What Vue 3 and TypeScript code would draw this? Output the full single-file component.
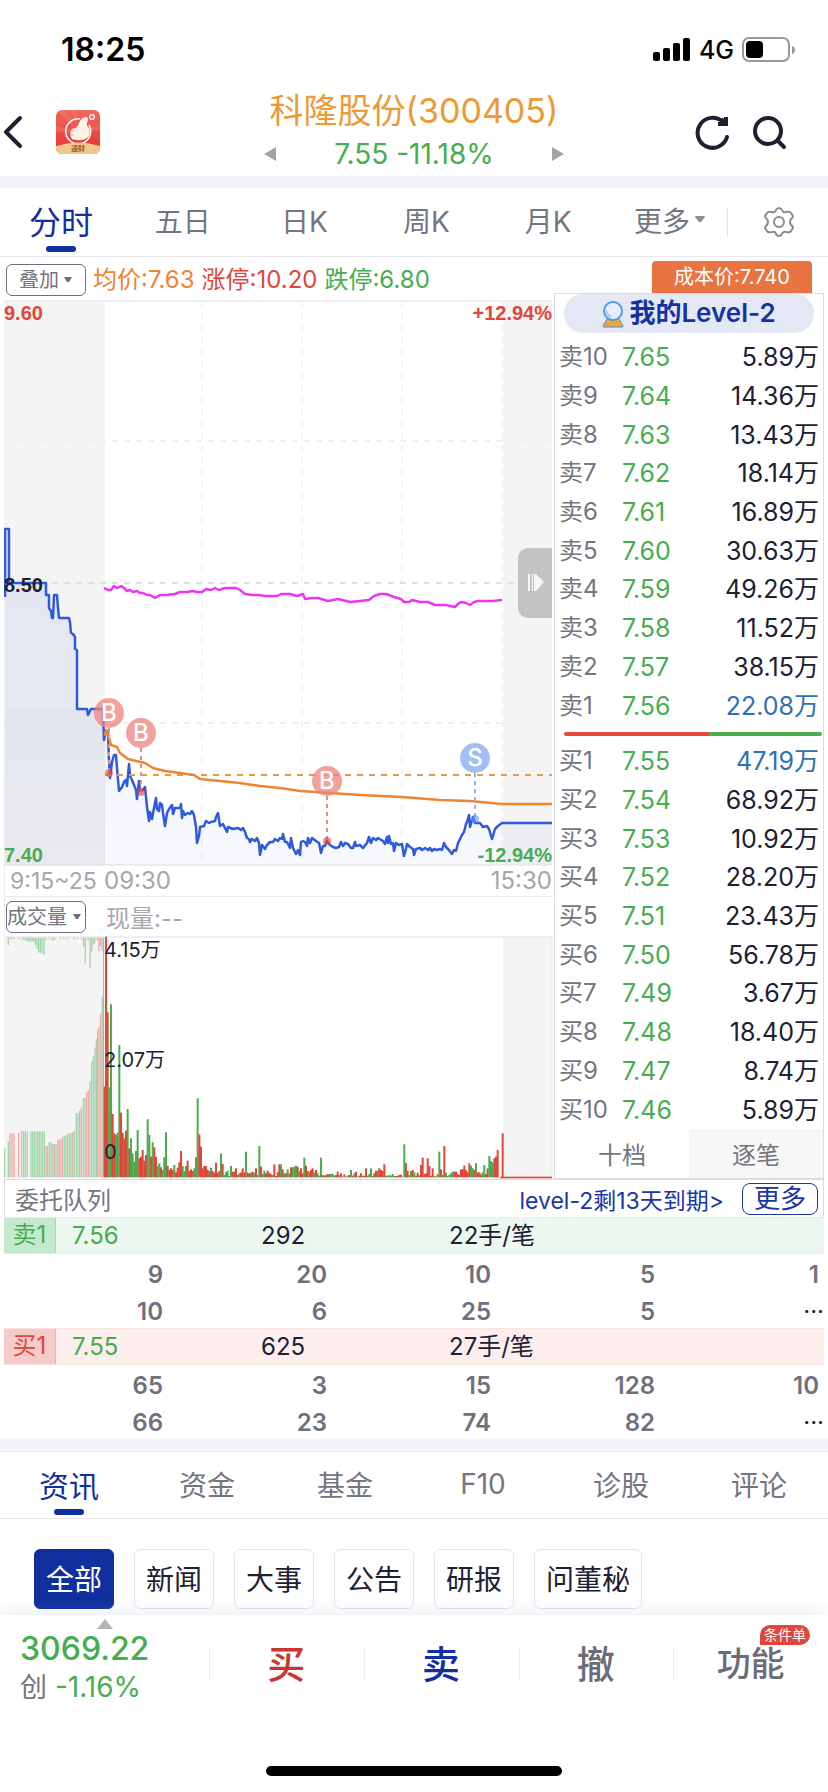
<script setup lang="ts">
import { ref } from 'vue'

interface Level { label: string; price: string; volume: string; mine?: boolean }
interface Bar { x: number; y: number; h: number; up: boolean }

const periods = ['分时', '五日', '日K', '周K', '月K']
const activePeriod = ref('分时')
const overlay = ref('叠加')
const indicator = ref('成交量')
const depthMode = ref('十档')

function levels(side: string, rows: [number, string, string][]): Level[] {
  return rows.map(([n, price, vol]) => ({
    label: side + n, price, volume: vol + '万', mine: n === 1,
  }))
}
const asks = levels('卖', [
  [10, '7.65', '5.89'], [9, '7.64', '14.36'], [8, '7.63', '13.43'], [7, '7.62', '18.14'],
  [6, '7.61', '16.89'], [5, '7.60', '30.63'], [4, '7.59', '49.26'], [3, '7.58', '11.52'],
  [2, '7.57', '38.15'], [1, '7.56', '22.08'],
])
const bids = levels('买', [
  [1, '7.55', '47.19'], [2, '7.54', '68.92'], [3, '7.53', '10.92'], [4, '7.52', '28.20'],
  [5, '7.51', '23.43'], [6, '7.50', '56.78'], [7, '7.49', '3.67'], [8, '7.48', '18.40'],
  [9, '7.47', '8.74'], [10, '7.46', '5.89'],
])

const queues = [
  { side: 'sell', label: '卖1', price: '7.56', count: '292', avg: '22手/笔',
    rows: [['9', '20', '10', '5', '1'], ['10', '6', '25', '5', '···']] },
  { side: 'buy', label: '买1', price: '7.55', count: '625', avg: '27手/笔',
    rows: [['65', '3', '15', '128', '10'], ['66', '23', '74', '82', '···']] },
]

const sections = ['资讯', '资金', '基金', 'F10', '诊股', '评论']
const activeSection = ref('资讯')
const filters = ['全部', '新闻', '大事', '公告', '研报', '问董秘']
const activeFilter = ref('全部')

const pricePoints =
  '5,597 5,529 9,529 9,583 46,583 46,595 49,595 49,608 51,611 52,618 53,618 54,595 57,595 58,608 59,618 69,618 70,622 71,633 73,634 75,637 75,649 77,650 77,709 87,709 88,715 90,711 91,709 103,709 104,740 106,730 108,733 109,760 110,778 112,762 114,755 116,755 117,768 119,791 122,787 124,782 126,780 127,786 129,764 130,776 132,780 134,785 136,790 137,799 139,781 140,791 143,790 145,787 147,807 149,821 150,812 152,819 154,808 156,798 157,809 159,811 160,803 162,805 163,813 165,826 167,813 169,809 172,805 173,814 175,808 180,808 181,804 182,818 183,811 185,815 188,813 190,814 192,811 194,815 196,827 197,843 199,836 200,827 204,826 206,821 209,823 211,822 215,821 216,817 218,813 220,826 223,824 225,828 227,832 228,827 233,829 238,828 241,830 243,828 245,832 247,838 249,839 250,842 252,839 255,841 257,838 259,843 260,855 262,845 265,849 267,845 270,842 273,842 275,839 278,841 280,838 282,839 283,834 285,842 287,842 290,848 291,838 293,848 296,854 298,850 300,855 301,842 303,841 305,842 307,846 308,838 310,843 312,838 316,841 319,843 321,853 323,846 325,846 327,841 330,845 333,847 336,848 339,847 341,842 343,846 345,843 348,844 351,848 353,848 355,842 356,846 360,845 363,848 367,843 369,837 371,843 373,838 376,840 378,838 383,841 385,844 387,837 388,843 389,836 391,844 393,843 394,851 396,843 399,845 402,844 404,856 406,849 407,844 410,847 413,849 414,855 416,849 420,848 422,850 425,848 428,850 430,848 432,851 434,849 437,850 440,849 442,850 444,843 446,847 449,850 452,854 454,850 456,851 458,843 460,839 462,835 464,832 466,824 467,822 469,815 470,827 473,817 475,823 480,823 483,827 487,826 489,829 492,839 495,829 498,826 502,823 552,823'
const areaPoints = `4,865 ${pricePoints} 552,865`
const avgPoints =
  '105,736 106,730 109,738 111,745 117,747 120,753 124,756 128,759 136,761 145,763 153,768 165,771 180,773 194,775 200,779 220,781 240,783 260,786 280,788 300,791 330,793 360,795 402,797 440,800 470,801 502,804 552,804'
const indexPoints =
  '104,588 108,590 111,590 114,586 117,588 121,586 124,588 127,591 130,590 133,592 137,591 140,593 143,593 147,595 150,595 155,598 160,595 166,595 175,594 180,592 187,592 193,591 197,592 202,592 206,589 211,590 215,588 219,590 225,588 232,588 236,588 240,590 245,594 252,595 259,595 265,596 272,596 277,596 281,594 290,594 297,596 303,594 305,599 312,598 318,598 328,601 338,599 350,602 360,601 369,600 374,596 380,594 386,594 394,597 401,599 404,602 409,602 412,600 420,602 428,602 435,605 446,605 455,607 459,603 462,602 466,603 470,605 474,602 478,601 485,601 493,601 502,600'

const trades = [
  { kind: 'B', x: 109, y: 713, dotY: 773 },
  { kind: 'B', x: 141, y: 733, dotY: 792 },
  { kind: 'B', x: 327, y: 781, dotY: 841 },
  { kind: 'S', x: 475, y: 758, dotY: 819 },
]

// Volume bars are drawn on a 1647 x 729 grid; each entry is a direction and the bar's top edge.
const base = 862
const session =
  'r590 r140 r367 g592 g343 r672 r730 g735 g728 g465 r668 r728 r745 r722 g657 r775 g745 g790 g815 g783 g720 r805 r800 r780 r812 r795 g688 g735 r800 g757 r772 r800 g827 g820 r832 g840 g802 g727 r827 r840 r835 r840 g825 r847 r833 r817 r783 g828 g843 g828 r812 r843 r838 r843 g835 g802 g625 r733 r770 r835 r828 r828 r840 r843 g833 r843 r848 r818 r848 r843 g790 r822 g855 g847 g842 g858 g828 r845 r845 r835 r855 g850 r848 r835 r847 g785 r848 r850 g848 r845 g848 r835 g855 g768 r830 g852 g842 r850 r842 r848 r853 g855 r823 r858 r847 r823 g823 r838 g850 r850 g838 g850 r832 g832 g830 g827 r830 g843 r835 r850 g803 r827 r843 g845 r840 r835 g847 r840 g850 g857 g803 r855 r857 r855 g852 r852 g852 g852 g857 r855 r845 g855 r850 r860 r853 r860 g857 r855 g840 r857 g850 r845 r860 r857 r850 g857 r857 r835 r857 g852 g835 g858 r850 r842 g842 r835 r840 r843 r823 g857 g857 g855 g857 g852 g858 r858 r858 r855 r854 r860 g763 r820 r842 g855 g843 r840 g847 g857 r848 g855 r825 r803 r852 r850 r805 r828 r858 r835 g857 r860 r853 g785 r838 g855 r768 g848 g858 g855 g850 g845 r845 r845 r852 r855 r838 r838 r827 r840 r847 r820 g827 g835 r840 g820 r847 r847 r853 g847 g825 r852 r835 g798 g813 g817 r805 r800 r780 r861 r861 r730'
const sessionBars: Bar[] = session.split(' ').map((s, i, all) => {
  const y = Number(s.slice(1))
  return { x: 310 + (i * 1200) / all.length, y, h: base - y, up: s[0] === 'r' }
})

const auction: [number, number, string][] = [
  [14, 775, 'g'], [25, 755, 'g'], [30, 730, 'r'], [36, 730, 'r'], [42, 730, 'r'], [56, 728, 'r'], [65, 722, 'g'],
  [71, 724, 'g'], [76, 724, 'g'], [82, 724, 'g'],
  ...Array.from({ length: 9 }, (_, i): [number, number, string] => [93 + i * 5, 724, 'g']),
  [138, 768, 'r'], [143, 768, 'r'], [148, 757, 'g'], [153, 757, 'g'], [158, 762, 'g'], [163, 762, 'r'], [168, 762, 'g'],
  [173, 750, 'r'], [178, 748, 'r'], [183, 747, 'r'], [188, 740, 'r'], [193, 737, 'g'], [198, 737, 'g'], [203, 732, 'g'],
  [208, 730, 'g'], [213, 728, 'g'], [218, 727, 'r'], [223, 722, 'g'], [229, 669, 'g'], [234, 669, 'g'], [239, 662, 'r'],
  [244, 652, 'r'], [250, 624, 'g'], [255, 622, 'g'], [260, 606, 'r'], [265, 600, 'r'], [270, 575, 'g'], [275, 515, 'g'],
  [280, 498, 'g'], [285, 472, 'g'], [289, 447, 'g'], [293, 418, 'r'], [297, 408, 'r'], [302, 370, 'r'], [307, 320, 'g'],
]
const auctionBars: Bar[] = auction.map(([x, y, d]) => ({ x: x - 2, y, h: base - y, up: d === 'r' }))

const unmatched: [number, number, string][] = [
  [25, 165, 'g'], [30, 147, 'r'], [36, 147, 'r'], [42, 147, 'g'], [56, 147, 'r'], [66, 149, 'g'], [71, 149, 'g'],
  [76, 151, 'g'], [81, 153, 'g'], [86, 155, 'g'], [91, 155, 'g'], [96, 155, 'g'], [101, 155, 'g'], [106, 164, 'g'],
  [111, 176, 'g'], [116, 188, 'g'], [121, 188, 'g'], [126, 190, 'g'], [132, 195, 'g'], [138, 150, 'r'], [150, 149, 'g'],
  [158, 152, 'r'], [164, 149, 'g'], [180, 148, 'r'], [192, 148, 'g'], [202, 148, 'g'], [222, 149, 'r'], [232, 148, 'g'],
  [245, 149, 'r'], [251, 170, 'g'], [256, 220, 'g'], [264, 152, 'r'], [270, 235, 'g'], [275, 185, 'g'], [280, 165, 'g'],
  [284, 160, 'g'], [292, 152, 'r'], [297, 184, 'r'], [302, 168, 'r'], [306, 182, 'g'],
]
const unmatchedBars: Bar[] = unmatched.map(([x, end, d]) => ({ x: x - 2, y: 143, h: end - 143, up: d === 'r' }))
</script>

<template>
  <div class="app">
    <div class="status">
      <span class="clock">18:25</span>
      <div class="signals">
        <svg width="38" height="24" viewBox="0 0 38 24" aria-hidden="true">
          <rect x="0" y="14" width="7" height="9" rx="2" /><rect x="10" y="10" width="7" height="13" rx="2" />
          <rect x="20" y="5" width="7" height="18" rx="2" /><rect x="30" y="0" width="7" height="23" rx="2" />
        </svg>
        <span class="net">4G</span>
        <svg width="54" height="26" viewBox="0 0 54 26" aria-hidden="true">
          <rect x="1" y="1" width="46" height="23" rx="6" fill="none" stroke="#999" stroke-width="2" />
          <rect x="4" y="4" width="17" height="17" rx="4" />
          <path d="M50 9 Q53 10 53 13 Q53 16 50 17Z" fill="#999" />
        </svg>
      </div>
    </div>

    <header class="header">
      <div class="head-left">
        <button class="icon-btn" type="button" aria-label="返回">
          <svg width="24" height="36" viewBox="0 0 24 36">
            <path d="M20 4 L6 18 L20 32" fill="none" stroke="#1d2033" stroke-width="4" stroke-linecap="round" stroke-linejoin="round" />
          </svg>
        </button>
        <svg class="logo" width="44" height="44" viewBox="0 0 44 44" role="img" aria-label="通财">
          <defs>
            <linearGradient id="lg" x1="0" y1="0" x2="0" y2="1"><stop offset="0" stop-color="#ee6a5c" /><stop offset="1" stop-color="#e52f30" /></linearGradient>
            <clipPath id="lc"><rect width="44" height="44" rx="6" /></clipPath>
          </defs>
          <g clip-path="url(#lc)">
            <rect width="44" height="44" fill="url(#lg)" />
            <path d="M22 22 L2 0 H8Z M22 22 L15 0 H20Z M22 22 L44 14 V20Z M22 22 L0 16 V22Z" fill="#f38a78" opacity=".35" />
            <path d="M24 9 A12.500 12.500 0 1 0 33 15" fill="none" stroke="#fff" stroke-width="1.500" />
            <path d="M15 20 Q17 18 20 18 Q22 16 24 11 Q26 7 31 7 Q33 9 31 13 Q30 15 33 18 Q35 25 31 28 Q25 32 16 29 Q13 25 15 20Z" fill="#fff3e6" />
            <path d="M14 21 h4 M14 25 h4" stroke="#f3a494" stroke-width="1" />
            <circle cx="36" cy="7" r="3" fill="#fff" /><path d="M36 5 v4 M34 7 h4" stroke="#e8453c" stroke-width="1" />
            <path d="M0 36 Q22 29 44 36 V44 H0Z" fill="#f1c98c" />
          </g>
          <text x="22" y="41" text-anchor="middle" class="logo-text">通财</text>
        </svg>
      </div>
      <div class="quote">
        <h1 class="title">科隆股份(300405)</h1>
        <div class="quote-row">
          <button class="icon-btn" type="button" aria-label="上一只"><svg width="12" height="14" viewBox="0 0 12 14"><path d="M12 0 V14 L0 7Z" fill="#a3a4ab" /></svg></button>
          <span class="last">7.55 -11.18%</span>
          <button class="icon-btn" type="button" aria-label="下一只"><svg width="12" height="14" viewBox="0 0 12 14"><path d="M0 0 V14 L12 7Z" fill="#a3a4ab" /></svg></button>
        </div>
      </div>
      <div class="head-right">
        <button class="icon-btn" type="button" aria-label="刷新">
          <svg width="36" height="36" viewBox="0 0 36 36" fill="none" stroke="#1d2033" stroke-width="4" stroke-linecap="round">
            <path d="M33 23 A15 15 0 1 1 29 8" /><path d="M24 10 H32 V3" stroke-linecap="butt" /><path d="M27 5 L33 10" stroke-linecap="butt" />
          </svg>
        </button>
        <button class="icon-btn" type="button" aria-label="搜索">
          <svg width="36" height="36" viewBox="0 0 36 36" fill="none" stroke="#1d2033" stroke-width="4" stroke-linecap="round">
            <circle cx="17" cy="17" r="13" /><path d="M27 27 L33 33" />
          </svg>
        </button>
      </div>
    </header>

    <div class="band"></div>

    <nav class="periods">
      <button v-for="p in periods" :key="p" type="button" class="tab" :class="{ active: p === activePeriod }" @click="activePeriod = p">{{ p }}</button>
      <button type="button" class="tab more" aria-haspopup="menu"><span>更多</span>
        <svg width="10" height="8" viewBox="0 0 10 8"><path d="M0 1 Q0 0 1 0 H9 Q10 0 10 1 L6 6 H4Z" fill="#8f8f93" /></svg>
      </button>
      <button type="button" class="gear" aria-label="设置">
        <svg width="32" height="32" viewBox="0 0 32 32" fill="none" stroke="#8c8c8c" stroke-width="2" stroke-linejoin="round">
          <path d="M16 2 Q18 2 19 4 Q20 7 23 6 Q27 5 28 7 L30 10 Q30 12 28 13 Q26 16 28 19 Q30 20 30 22 L28 25 Q27 27 23 26 Q20 25 19 28 Q18 30 16 30 Q14 30 13 28 Q12 25 9 26 Q5 27 4 25 L2 22 Q2 20 4 19 Q6 16 4 13 Q2 12 2 10 L4 7 Q5 5 9 6 Q12 7 13 4 Q14 2 16 2Z" />
          <circle cx="16" cy="16" r="5" />
        </svg>
      </button>
    </nav>

    <main class="board">
      <section class="charts">
        <div class="info">
          <label class="pick">
            <select v-model="overlay" class="indent" aria-label="叠加"><option>叠加</option></select>
            <svg width="8" height="6" viewBox="0 0 8 6"><path d="M0 0 H8 L5 5 H3Z" fill="#6e6f7c" /></svg>
          </label>
          <span class="avg">均价:7.63</span><span class="red">涨停:10.20</span><span class="green">跌停:6.80</span>
        </div>

        <div class="plot">
          <svg class="canvas" viewBox="4 300 549 566" role="img" aria-label="分时走势">
            <defs>
              <linearGradient id="area" x1="0" y1="0" x2="0" y2="1"><stop offset="0" stop-color="#3a5bd9" stop-opacity=".1" /><stop offset="1" stop-color="#3a5bd9" stop-opacity=".04" /></linearGradient>
            </defs>
            <rect x="4" y="300" width="101" height="566" fill="#f4f4f4" /><rect x="503" y="300" width="49" height="566" fill="#f4f4f4" />
            <path d="M4 301 H552 M4 865 H552" stroke="#efefef" stroke-width="2" />
            <g stroke="#f5f5f6" stroke-width="2" stroke-dasharray="6 6">
              <path d="M202 301 V865 M302 301 V865 M402 301 V865 M502 301 V865" />
              <path d="M4 441 H552 M4 723 H552" stroke="#f0f0f2" /><path d="M4 583 H552" stroke="#dfdfe2" />
            </g>
            <polygon :points="areaPoints" fill="url(#area)" />
            <rect x="4" y="709" width="101" height="156" fill="#22284a" opacity=".02" />
            <polyline :points="indexPoints" class="line" stroke="#ea35f5" />
            <polyline :points="pricePoints" class="line" stroke="#2f5bdb" />
            <path d="M105 775 H552" stroke="#ec9a3f" stroke-width="2" stroke-dasharray="6 6" />
            <polyline :points="avgPoints" class="line" stroke="#ef8533" />
            <g v-for="t in trades" :key="t.x" :class="t.kind === 'B' ? 'mark-buy' : 'mark-sell'">
              <path :d="`M${t.x} ${t.y + 15} V${t.dotY}`" stroke-width="2" stroke-dasharray="4 4" class="stem" />
              <circle :cx="t.x" :cy="t.dotY" r="4" class="dot" />
              <circle :cx="t.x" :cy="t.y" r="15" class="disc" />
              <text :x="t.x" :y="t.y + 8" text-anchor="middle" class="mark-text">{{ t.kind }}</text>
            </g>
          </svg>
          <span class="axis top-left red">9.60</span><span class="axis top-right red">+12.94%</span>
          <span class="axis mid-left">8.50</span>
          <span class="axis bottom-left green">7.40</span><span class="axis bottom-right green">-12.94%</span>
          <button type="button" class="handle" aria-label="收起盘口">
            <svg width="16" height="18" viewBox="0 0 16 18" fill="#f6f6f6"><rect x="0" y="0" width="2" height="17" /><rect x="4" y="0" width="1" height="17" /><path d="M6 0 L8 0 L16 8 L8 17 H6Z" /></svg>
          </button>
        </div>

        <div class="times"><span class="pre">9:15~25</span><span>09:30</span><span class="end">15:30</span></div>

        <div class="vol-head">
          <label class="pick">
            <select v-model="indicator" aria-label="指标"><option>成交量</option></select>
            <svg width="8" height="6" viewBox="0 0 8 6"><path d="M0 0 H8 L5 5 H3Z" fill="#6e6f7c" /></svg>
          </label>
          <span class="now">现量:--</span>
        </div>

        <div class="plot">
          <svg class="canvas" viewBox="12 138 1647 729" role="img" aria-label="成交量">
            <rect x="12" y="138" width="303" height="726" fill="#f4f4f4" /><rect x="1509" y="138" width="147" height="726" fill="#f4f4f4" />
            <path d="M12 141 H1656 M1656 141 V864" stroke="#ececec" stroke-width="5" fill="none" />
            <rect v-for="(b, i) in unmatchedBars" :key="'u' + i" :x="b.x" :y="b.y" :height="b.h" width="4" :class="b.up ? 'pale-up' : 'pale-down'" />
            <rect v-for="(b, i) in auctionBars" :key="'a' + i" :x="b.x" :y="b.y" :height="b.h" width="4" :class="b.up ? 'pale-up' : 'pale-down'" />
            <rect x="309" y="143" width="3" height="448" fill="#8fc99a" />
            <rect v-for="(b, i) in sessionBars" :key="'s' + i" :x="b.x" :y="b.y" :height="b.h" width="6" :class="b.up ? 'up' : 'down'" />
            <rect x="1500" y="860" width="156" height="5" class="up" />
          </svg>
          <span class="tick t1">4.15万</span><span class="tick t2">2.07万</span><span class="tick t3">0</span>
        </div>
      </section>

      <aside class="side">
        <div class="cost-row"><button type="button" class="cost">成本价:7.740</button></div>
        <div class="book">
          <button type="button" class="level2">
            <svg width="22" height="28" viewBox="0 0 22 28" aria-hidden="true">
              <path d="M5 19 H17 L21 26 Q21 27 20 27 H2 Q1 27 1 26Z" fill="#f0a63a" stroke="#4a90d9" stroke-width="1" />
              <circle cx="11" cy="11" r="9" fill="#e6effc" stroke="#4d9be6" stroke-width="2" /><path d="M4 10 Q5 15 9 17" stroke="#a9c9ee" stroke-width="2" fill="none" />
            </svg>
            <span>我的Level-2</span>
          </button>
          <table class="levels">
            <tbody>
              <tr v-for="r in asks" :key="r.label"><th scope="row">{{ r.label }}</th><td class="price">{{ r.price }}</td><td class="vol" :class="{ mine: r.mine }">{{ r.volume }}</td></tr>
            </tbody>
          </table>
          <div class="ratio"><i class="ratio-red"></i><i class="ratio-green"></i></div>
          <table class="levels">
            <tbody>
              <tr v-for="r in bids" :key="r.label"><th scope="row">{{ r.label }}</th><td class="price">{{ r.price }}</td><td class="vol" :class="{ mine: r.mine }">{{ r.volume }}</td></tr>
            </tbody>
          </table>
          <div class="modes">
            <button v-for="m in ['十档', '逐笔']" :key="m" type="button" :class="{ on: m === depthMode }" @click="depthMode = m">{{ m }}</button>
          </div>
        </div>
      </aside>
    </main>

    <section class="queue">
      <div class="queue-head">
        <span class="queue-title">委托队列</span>
        <a href="#" class="expire">level-2剩13天到期&gt;</a>
        <button type="button" class="queue-more">更多</button>
      </div>
      <div v-for="q in queues" :key="q.side" :class="q.side">
        <div class="queue-row"><span class="tag">{{ q.label }}</span><span class="q-price">{{ q.price }}</span><span>{{ q.count }}</span><span>{{ q.avg }}</span></div>
        <table class="lots">
          <tbody>
            <tr v-for="(row, i) in q.rows" :key="i"><td v-for="(c, j) in row" :key="j" :class="{ dots: c === '···' }">{{ c }}</td></tr>
          </tbody>
        </table>
      </div>
    </section>

    <div class="band"></div>

    <nav class="sections">
      <button v-for="s in sections" :key="s" type="button" class="tab" :class="{ active: s === activeSection }" @click="activeSection = s">{{ s }}</button>
    </nav>
    <div class="filters">
      <button v-for="f in filters" :key="f" type="button" class="chip" :class="{ chosen: f === activeFilter }" @click="activeFilter = f">{{ f }}</button>
    </div>

    <footer class="dock">
      <div class="actions">
        <div class="index">
          <svg class="expand" width="16" height="10" viewBox="0 0 16 10" aria-hidden="true"><path d="M8 0 L16 10 H0Z" fill="#b4b4b8" /></svg>
          <span class="index-value">3069.22</span>
          <span class="index-change"><em>创</em> -1.16%</span>
        </div>
        <button type="button" class="action buy-action">买</button>
        <button type="button" class="action sell-action">卖</button>
        <button type="button" class="action">撤</button>
        <button type="button" class="action tools">功能<span class="badge">条件单</span></button>
      </div>
      <div class="home"></div>
    </footer>
  </div>
</template>

<style>
body { margin: 0; background: #fff; }
</style>

<style scoped>
.app { min-height: 100vh; display: flex; flex-direction: column; background: #fff; color: #1d2033; font-family: Inter, "Noto Sans CJK SC", sans-serif; font-size: 24px; overflow: hidden; }
button, select { font: inherit; color: inherit; background: none; border: 0; padding: 0; margin: 0; }
button { cursor: pointer; white-space: nowrap; }
svg { display: block; }
.red { color: #e2463a; }
.green { color: #47ad50; }

.status { display: flex; justify-content: space-between; align-items: center; height: 76px; padding: 12px 32px 0 61px; color: #000; }
.clock { font-size: 32px; line-height: 38px; font-weight: 600; }
.signals { display: flex; align-items: center; gap: 8px; }
.net { font-size: 25px; font-weight: 500; line-height: 24px; }

.header { display: grid; grid-template-columns: 1fr auto 1fr; align-items: center; height: 88px; }
.head-left { display: flex; align-items: center; gap: 32px; }
.icon-btn { display: block; flex: none; }
.logo-text { font: 700 7px "Noto Sans CJK SC", sans-serif; fill: #a0602a; }
.quote { display: flex; flex-direction: column; align-items: center; }
.title { margin: 0; font-size: 34px; line-height: 44px; font-weight: 400; color: #eb9a37; }
.quote-row { display: flex; align-items: center; gap: 58px; height: 42px; color: #47ad50; font-size: 28px; }
.head-right { display: flex; justify-content: flex-end; gap: 21px; padding-right: 41px; }

.band { height: 12px; background: #f4f5fa; flex: none; }
.periods, .sections { display: flex; height: 68px; border-bottom: 1px solid #e9e9ec; }
.tab { position: relative; flex: 1; padding-bottom: 4px; font-size: 28px; color: #74757f; }
.tab.active { color: #122fa0; font-size: 32px; }
.tab.active::after { content: ""; position: absolute; left: 50%; bottom: 4px; width: 30px; height: 6px; margin-left: -15px; border-radius: 3px; background: #122fa0; }
.more { flex: 0 0 118px; display: flex; align-items: center; justify-content: flex-end; gap: 5px; padding-right: 22px; }
.gear { display: flex; align-items: center; width: 101px; padding-left: 36px; position: relative; }
.gear::before { content: ""; position: absolute; left: 0; top: 21px; height: 27px; border-left: 1px solid #e3e3e6; }
.sections { height: 66px; border-top: 1px solid #e9e9ec; }
.sections .tab { padding-bottom: 2px; }
.sections .tab.active { font-size: 30px; }
.sections .tab.active::after { bottom: 3px; }

.board { display: grid; grid-template-columns: 549fr 270fr; gap: 1px; padding: 0 4px; }
.charts { min-width: 0; }
.info { display: flex; align-items: center; gap: 7px; height: 43px; padding-left: 2px; box-sizing: border-box; white-space: nowrap; }
.info span { padding-bottom: 3px; }
.info .pick { margin: 2px 0 0; }
.avg { color: #ed8436; }
.pick { position: relative; display: flex; align-items: center; width: 80px; height: 32px; box-sizing: border-box; border: 1px solid #6e6f7c; border-radius: 6px; color: #74757f; font-size: 20px; }
.pick select { appearance: none; width: 100%; height: 100%; outline: 0; }
.pick select.indent { padding-left: 12px; }
.pick svg { position: absolute; right: 4px; pointer-events: none; }
.info .pick svg { right: 13px; }
.plot { position: relative; }
.canvas { width: 100%; height: auto; }
.line { fill: none; stroke-width: 2.500; stroke-linejoin: round; }
.mark-text { font: 500 24px Inter, sans-serif; fill: #fff; }
.stem { stroke: #ec8a84; }
.disc { fill: #ee837a; opacity: .75; }
.dot { fill: #e0483f; opacity: .6; }
.mark-sell .stem { stroke: #8fb4ee; }
.mark-sell .disc { fill: #82a9ee; }
.mark-sell .dot { fill: #5f96ea; }
.axis { position: absolute; font: 700 20px/24px "Liberation Sans", Arial, sans-serif; }
.top-left { left: 0; top: 1px; }
.top-right { right: 1px; top: 1px; }
.mid-left { left: 0; top: 50%; margin-top: -10px; }
.bottom-left { left: 0; bottom: -1px; }
.bottom-right { right: 1px; bottom: -1px; }
.handle { position: absolute; right: 1px; top: 248px; width: 34px; height: 70px; display: flex; align-items: center; padding-left: 10px; border-radius: 10px 0 0 10px; background: #c3c3c3; }
.times { display: flex; align-items: center; height: 30px; padding: 0 1px 0 5px; border-left: 1px solid #ececec; border-bottom: 1px solid #ececec; color: #a6a6ad; line-height: 28px; }
.times span { padding-bottom: 1px; }
.pre { width: 94px; font-size: 23px; }
.end { margin-left: auto; }
.vol-head { display: flex; align-items: center; gap: 20px; height: 39px; padding-left: 1px; border-left: 1px solid #ececec; }
.now { color: #a9a9ad; }
.up { fill: #e24638; }
.down { fill: #4aab4f; }
.pale-up { fill: #efaaa7; }
.pale-down { fill: #a2d6ac; }
.tick { position: absolute; left: 100px; font-size: 20px; line-height: 24px; }
.t1 { top: 2px; }
.t2 { top: 46%; }
.t3 { bottom: 15px; }

.side { display: flex; flex-direction: column; min-width: 0; }
.cost-row { height: 36px; padding: 4px 12px 0 0; box-sizing: border-box; display: flex; justify-content: flex-end; }
.cost { width: 160px; background: #e77441; color: #fff; font-size: 20px; line-height: 32px; border-radius: 4px 4px 0 0; }
.book { flex: 1; display: flex; flex-direction: column; border: 1px solid #dcdcde; }
.level2 { display: flex; align-items: center; justify-content: center; gap: 5px; height: 39px; margin: 0 9px 5px; border-radius: 20px; background: #e4e8f4; color: #1533a0; font-size: 26px; line-height: 34px; font-weight: 600; }
.level2 span { padding-bottom: 2px; }
.levels { width: 100%; height: 387px; border-collapse: collapse; font-size: 25px; }
.levels th, .levels td { padding: 0; line-height: 30px; font-weight: 400; white-space: nowrap; }
.levels th { width: 63px; padding-left: 4px; text-align: left; font-size: 24px; color: #74757f; }
.price { color: #47ad50; }
.levels .vol { padding-right: 4px; text-align: right; }
.levels .mine { color: #2f6fb3; }
.ratio { display: flex; height: 4px; margin: 7px 1px 6px 9px; }
.ratio-red { flex: 146; background: #e8483b; border-radius: 2px 0 0 2px; }
.ratio-green { flex: 113; background: #4cac50; border-radius: 0 2px 2px 0; }
.modes { display: flex; flex: 1; min-height: 48px; color: #74757f; }
.modes button { flex: 1; background: #f7f7f7; }
.modes .on { background: #fff; }

.queue { margin: 0 4px; }
.queue-head { display: flex; align-items: center; height: 37px; padding: 0 5px 0 10px; border: 1px solid #dcdcde; border-width: 1px 1px 0; }
.queue-title { flex: 1; color: #74757f; }
.expire { color: #1836a4; text-decoration: none; font-size: 23px; margin-right: 18px; }
.queue-more { width: 76px; height: 32px; border: 1px solid #1836a4; border-radius: 8px; color: #1836a4; font-size: 26px; line-height: 28px; }
.queue-row { display: grid; grid-template-columns: 68px 189fr 188fr 375fr; align-items: center; height: 37px; box-sizing: border-box; background: #ecf7ef; border: 1px solid #dff0e4; border-width: 1px 0; line-height: 34px; }
.tag { width: 51px; height: 35px; text-align: center; background: #c5e9cf; border-right: 1px solid #a9d9b5; color: #47ad50; }
.q-price { color: #47ad50; }
.buy .queue-row { background: #fdeeee; border-color: #fbe3e2; }
.buy .tag { background: #f5cbca; border-color: #efafad; color: #e2463a; }
.lots { width: 100%; table-layout: fixed; border-collapse: collapse; }
.lots td { height: 37px; padding: 5px 5px 0 0; box-sizing: border-box; text-align: right; font-weight: 600; line-height: 30px; color: #6f707c; }
.lots td.dots { padding-right: 0; color: #1d2033; font-weight: 400; }

.filters { display: flex; gap: 20px; padding: 30px 34px 6px; }
.chip { height: 60px; padding: 0 11px 2px; border: 1px solid #e6e6ea; border-radius: 6px; font-size: 28px; }
.chip.chosen { background: #122fa0; border-color: #122fa0; color: #fff; }

.dock { position: relative; flex: 1; display: flex; flex-direction: column; align-items: center; justify-content: space-between; background: #fff; box-shadow: 0 -4px 14px rgba(150, 155, 200, .16); }
.actions { align-self: stretch; display: flex; height: 98px; }
.index { position: relative; width: 209px; padding: 15px 0 0 20px; box-sizing: border-box; display: flex; flex-direction: column; color: #47ad50; }
.expand { position: absolute; left: 97px; top: 4px; }
.index-value { font-size: 32px; line-height: 38px; font-weight: 500; }
.index-change { font-size: 28px; line-height: 38px; white-space: nowrap; }
.index-change em { font-style: normal; font-size: 27px; color: #74757f; }
.action { position: relative; flex: 1; padding-bottom: 6px; font-size: 38px; font-weight: 500; color: #6b6c78; }
.action::before { content: ""; position: absolute; left: 0; top: 32px; height: 33px; border-left: 1px solid #ececf0; }
.buy-action { color: #cb3530; }
.sell-action { color: #122fa0; }
.tools { font-size: 34px; }
.badge { position: absolute; right: 18px; top: 10px; padding: 0 4px; background: #e2463a; color: #fff; font-size: 14px; line-height: 20px; font-weight: 400; border-radius: 10px 10px 10px 0; }
.home { width: 296px; height: 10px; margin-bottom: 16px; border-radius: 5px; background: #000; }
</style>
